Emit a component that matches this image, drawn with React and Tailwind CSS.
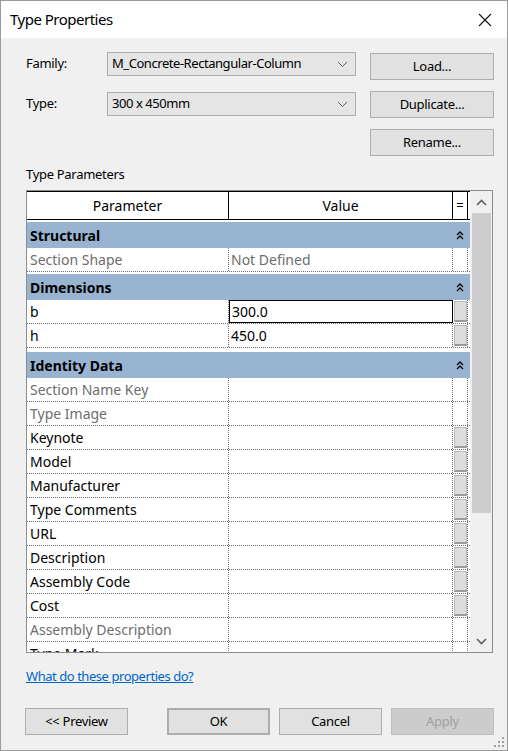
import React from "react";

const groups = [
  {
    name: "Structural",
    cls: "h-[28px]",
    rows: [{ p: "Section Shape", v: "Not Defined", ro: true }],
  },
  {
    name: "Dimensions",
    cls: "h-[28px]",
    rows: [
      { p: "b", v: "300.0", btn: true, active: true },
      { p: "h", v: "450.0", btn: true },
    ],
  },
  {
    name: "Identity Data",
    cls: "h-[30px]",
    rows: [
      { p: "Section Name Key", ro: true },
      { p: "Type Image", ro: true },
      { p: "Keynote", btn: true },
      { p: "Model", btn: true },
      { p: "Manufacturer", btn: true },
      { p: "Type Comments", btn: true },
      { p: "URL", btn: true },
      { p: "Description", btn: true },
      { p: "Assembly Code", btn: true },
      { p: "Cost", btn: true },
      { p: "Assembly Description", ro: true },
      { p: "Type Mark" },
    ],
  },
];

function Chevron() {
  return (
    <svg width="11" height="7" viewBox="0 0 11 7" className="shrink-0">
      <path d="M1 1 L5.5 5.5 L10 1" fill="none" stroke="#5f5f5f" strokeWidth="1" />
    </svg>
  );
}

function Combo({ text }) {
  return (
    <div className="w-[249px] h-[24px] bg-[#e5e5e5] border border-[#acacac] flex items-center justify-between pl-[4px] pr-[7px] text-[13px] tracking-[-0.45px] text-black">
      <span>{text}</span>
      <Chevron />
    </div>
  );
}

function Btn({ children, className = "" }) {
  return (
    <div
      className={`h-[27px] bg-[#e1e1e1] border border-[#adadad] flex items-center justify-center text-[13px] tracking-[-0.3px] text-black ${className}`}
    >
      {children}
    </div>
  );
}

function Collapse() {
  return (
    <svg width="8" height="9" viewBox="0 0 8 9">
      <path d="M1 4 L4 1 L7 4 M1 8 L4 5 L7 8" fill="none" stroke="#000" strokeWidth="1.3" />
    </svg>
  );
}

export default function App() {
  return (
    <div className="w-[508px] h-[751px] border border-[#9a9a9a] bg-[#f0f0f0] flex flex-col font-['Noto_Sans','Open_Sans',sans-serif] text-black overflow-hidden">
      {/* Title bar */}
      <div className="h-[37px] bg-white flex items-center justify-between pl-[9px] pr-[15px] shrink-0">
        <span className="text-[15px] tracking-[-0.5px]">Type Properties</span>
        <svg width="14" height="14" viewBox="0 0 14 14">
          <path d="M1 1 L13 13 M13 1 L1 13" stroke="#111" strokeWidth="1.1" />
        </svg>
      </div>

      {/* Family / Type */}
      <div className="flex pl-[25px]">
        <div className="pt-[14px] flex flex-col gap-[16px]">
          <div className="flex items-center">
            <span className="w-[81px] text-[13px] tracking-[-0.3px]">Family:</span>
            <Combo text="M_Concrete-Rectangular-Column" />
          </div>
          <div className="flex items-center">
            <span className="w-[81px] text-[13px] tracking-[-0.3px]">Type:</span>
            <Combo text="300 x 450mm" />
          </div>
        </div>
        <div className="pt-[15px] ml-[14px] flex flex-col gap-[11px]">
          <Btn className="w-[124px]">Load...</Btn>
          <Btn className="w-[124px]">Duplicate...</Btn>
          <Btn className="w-[124px]">Rename...</Btn>
        </div>
      </div>

      <div className="pl-[25px] mt-[9px] text-[13px] tracking-[-0.3px] leading-[18px]">Type Parameters</div>

      {/* Property grid */}
      <div className="ml-[25px] mt-[7px] w-[467px] h-[463px] border border-[#8c8c8c] bg-white flex shrink-0">
        <div className="w-[443px] h-full overflow-hidden flex flex-col">
          <div className="h-[29px] shrink-0 flex border-y border-black text-[14px]">
            <div className="w-[202px] border-r border-black flex items-center justify-center">Parameter</div>
            <div className="w-[224px] border-r border-black flex items-center justify-center">Value</div>
            <div className="w-[15px] border-r border-black flex items-center justify-center text-[13px]">=</div>
          </div>
          {groups.map((g) => (
            <div key={g.name}>
              <div className={`${g.cls} flex flex-col justify-end bg-white`}>
                <div className="h-[26px] bg-[#99b4d1] flex items-center justify-between pl-[3px] pr-[6px]">
                  <span className="text-[14px] font-bold">{g.name}</span>
                  <Collapse />
                </div>
              </div>
              {g.rows.map((r) => (
                <div key={r.p} className="h-[24px] flex border-b border-dotted border-[#6f6f6f] text-[14px]">
                  <div
                    className={`w-[202px] border-r border-dotted border-[#6f6f6f] flex items-center pl-[3px] ${
                      r.ro ? "text-[#6d6d6d]" : "text-black"
                    }`}
                  >
                    {r.p}
                  </div>
                  <div
                    className={`w-[224px] flex items-center pl-[2px] ${
                      r.active ? "border border-black" : "border-r border-dotted border-[#6f6f6f]"
                    } ${r.ro ? "text-[#6d6d6d]" : "text-black"}`}
                  >
                    {r.v}
                  </div>
                  <div className="w-[15px] border-r border-dotted border-[#6f6f6f] flex items-center justify-center">
                    {r.btn && (
                      <div className="w-[13px] h-[21px] bg-[#dddddd] border border-[#b8b8b8] border-b-2 border-b-[#9a9a9a]" />
                    )}
                  </div>
                </div>
              ))}
            </div>
          ))}
        </div>
        {/* Scrollbar */}
        <div className="w-[22px] h-full bg-[#f0f0f0] flex flex-col items-center">
          <div className="h-[22px] w-full flex items-center justify-center">
            <svg width="11" height="7" viewBox="0 0 11 7">
              <path d="M1 6 L5.5 1.5 L10 6" fill="none" stroke="#606060" strokeWidth="1.6" />
            </svg>
          </div>
          <div className="w-[19px] h-[300px] bg-[#cdcdcd]" />
          <div className="flex-1" />
          <div className="h-[22px] w-full flex items-center justify-center">
            <svg width="11" height="7" viewBox="0 0 11 7">
              <path d="M1 1 L5.5 5.5 L10 1" fill="none" stroke="#606060" strokeWidth="1.6" />
            </svg>
          </div>
        </div>
      </div>

      <div className="pl-[25px] mt-[14px] text-[13px] tracking-[-0.45px] leading-[18px]">
        <span className="text-[#0066cc] underline">What do these properties do?</span>
      </div>

      {/* Bottom buttons */}
      <div className="flex items-center pl-[24px] mt-[23px]">
        <Btn className="w-[103px]">&lt;&lt; Preview</Btn>
        <Btn className="w-[103px] ml-[39px] border-2 border-[#0078d7]">OK</Btn>
        <Btn className="w-[103px] ml-[9px]">Cancel</Btn>
        <div className="w-[103px] h-[27px] ml-[9px] bg-[#cccccc] border border-[#bfbfbf] flex items-center justify-center text-[13px] tracking-[-0.3px] text-[#a0a0a0]">
          Apply
        </div>
      </div>

      <div className="flex-1 flex items-end justify-end pr-[2px] pb-[2px]">
        <svg width="11" height="11" viewBox="0 0 11 11">
          {[
            [8, 0], [8, 4], [4, 4], [8, 8], [4, 8], [0, 8],
          ].map(([x, y], i) => (
            <rect key={i} x={x} y={y} width="2" height="2" fill="#a0a0a0" />
          ))}
        </svg>
      </div>
    </div>
  );
}
